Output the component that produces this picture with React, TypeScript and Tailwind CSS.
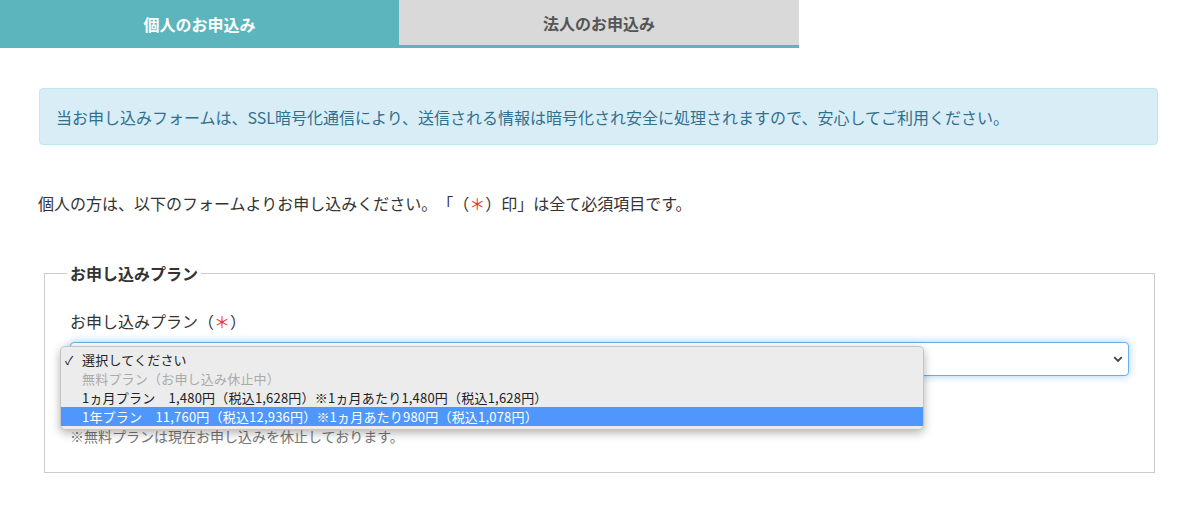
const plans = [
  { label: '無料プラン（お申し込み休止中）', disabled: true },
  { label: '1ヵ月プラン　1,480円（税込1,628円）※1ヵ月あたり1,480円（税込1,628円）' },
  { label: '1年プラン　11,760円（税込12,936円）※1ヵ月あたり980円（税込1,078円）', active: true },
]

export default function App() {
  return (
    <div className="min-h-[507px] w-full bg-white text-[#333] [text-spacing-trim:space-all] font-['Noto_Sans_CJK_JP','Liberation_Sans',sans-serif]">
      {/* tabs */}
      <div className="flex w-[799px]">
        <div className="flex h-[48px] w-[399px] items-center justify-center bg-[#5cb5bd] pb-[1px] text-[16px] font-bold text-white">個人のお申込み</div>
        <div className="flex h-[48px] w-[400px] items-center justify-center border-b-[3px] border-[#5cb5bd] bg-[#d9d9d9] pt-[1px] text-[16px] font-bold text-[#555]">法人のお申込み</div>
      </div>

      <div className="ml-[39px] mr-[37px] mt-[40px] flex h-[57px] items-center rounded-[4px] border border-[#bce8f1] bg-[#d9edf7] px-[16px] text-[16px] leading-[24px] text-[#31708f]">
        当お申し込みフォームは、SSL暗号化通信により、送信される情報は暗号化され安全に処理されますので、安心してご利用ください。
      </div>

      <p className="ml-[38px] mt-[46px] text-[16px] leading-[24px]">
        個人の方は、以下のフォームよりお申し込みください。「（<span className="text-[#e8352e]">＊</span>）印」は全て必須項目です。
      </p>

      <fieldset className="ml-[44px] mt-[46px] w-[1111px] border border-[#ccc] pb-[26px] pl-[22px] pr-[25px]">
        <legend className="px-[3px] text-[16px] font-bold leading-[24px]">お申し込みプラン</legend>
        <div className="pl-[3px]">
          <label className="mt-[24px] block text-[16px] leading-[24px]">
            お申し込みプラン（<span className="text-[#e8352e]">＊</span>）
          </label>
          <div className="relative mt-[9px]">
            <div className="flex h-[34px] items-center justify-end rounded-[4px] border border-[#66afe9] bg-white pr-[5px] shadow-[0_0_8px_rgba(102,175,233,0.6)]">
              <svg width="10" height="7" viewBox="0 0 10 7" className="text-[#444]">
                <polyline points="1.2,1.2 5,5 8.8,1.2" fill="none" stroke="currentColor" strokeWidth="1.8" />
              </svg>
            </div>
            {/* open native list */}
            <div className="absolute left-[-10px] top-[4px] w-[864px] rounded-[5px] border border-[#c4c4c4] bg-[#ececec] py-[3px] text-[13px] leading-[19px] tracking-[0.2px] text-[#222] shadow-[0_3px_10px_rgba(0,0,0,0.3)]">
              <div className="flex h-[19px] items-center">
                <span className="w-[21px] pl-[4px] text-[12px]">✓</span>
                <span>選択してください</span>
              </div>
              {plans.map((p) => (
                <div
                  key={p.label}
                  className={`flex h-[19px] items-center pl-[21px] ${p.disabled ? 'text-[#aaa]' : ''} ${p.active ? 'bg-[#4f97fa] text-white' : ''}`}
                >
                  {p.label}
                </div>
              ))}
            </div>
          </div>
          <p className="mt-[50px] text-[14px] leading-[20px] text-[#777]">※無料プランは現在お申し込みを休止しております。</p>
        </div>
      </fieldset>
    </div>
  )
}
